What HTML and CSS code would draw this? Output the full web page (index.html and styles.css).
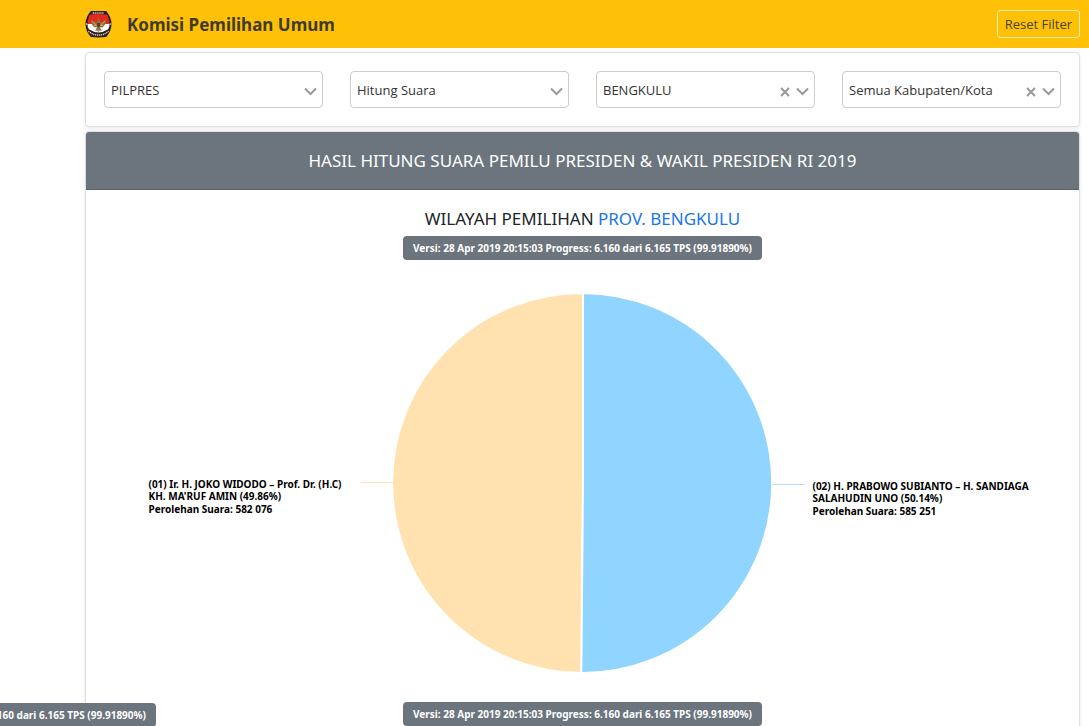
FILE: index.html
```html
<!DOCTYPE html>
<html lang="id">
  <head>
    <meta charset="utf-8">
    <meta name="viewport" content="width=device-width, initial-scale=1.0">
    <title>Komisi Pemilihan Umum</title>
    <link rel="stylesheet" href="styles.css">
  </head>
  <body>
    <header class="navbar">
      <svg class="logo" viewBox="0 0 28 28" aria-hidden="true">
        <path d="M6 .5h16Q27.500 7 27.500 14T22 27.500Q14 28.500 6 27.500Q.5 21 .5 14T6 .5z" fill="#2b2019"/>
        <path d="M5 4.500Q14 3 23 4.500Q25.500 9 25.500 14H2.500Q2.500 9 5 4.500z" fill="#e3281d"/>
        <path d="M2.500 14h23Q25.500 17 24 19.500Q14 26 4 19.500Q2.500 17 2.500 14z" fill="#fff"/>
        <path d="M6.500 9Q5.500 14 10 17.500L12.500 17L11 20.500L14 22L17 20.500L15.500 17L18 17.500Q22.500 14 21.500 9L18 12.500L15.500 12L15 8.500L13 8L13 12L10 12.500z" fill="#94703f"/>
        <path d="M7.500 11l4 4M20.500 11l-4 4M9 15.500l3 0M19 15.500l-3 0" stroke="#d8b878" stroke-width=".8" fill="none"/>
        <path d="M12.500 13h3v3l-1.500 1.500l-1.500-1.500z" fill="#5e3a20"/>
        <path d="M10 20.500h8" stroke="#a9a29a" stroke-width="1"/>
        <path d="M8 2.500h12" stroke="#ddd" stroke-width="1.500" stroke-dasharray="1.200 .8"/>
        <path d="M3.500 21.500Q8 25.500 14 25.500T24.500 21.500" stroke="#ddd" stroke-width="1.500" stroke-dasharray="1.200 .8" fill="none"/>
        <circle cx="1.700" cy="14" r=".7" fill="#fff"/>
        <circle cx="26.300" cy="14" r=".7" fill="#fff"/>
      </svg>
      <h1 class="brand">Komisi Pemilihan Umum</h1>
      <button type="button" class="btn-reset">Reset Filter</button>
    </header>

    <main class="content">
      <form class="card filters">
        <div class="select-box">
          <select class="select" aria-label="Pemilihan">
            <option>PILPRES</option>
          </select>
          <div class="select-icons">
            <svg class="arrow" viewBox="0 0 13 9"><path d="M1 1.500l5.500 5.500L12 1.500"/></svg>
          </div>
        </div>
        <div class="select-box">
          <select class="select" aria-label="Tampilan">
            <option>Hitung Suara</option>
          </select>
          <div class="select-icons">
            <svg class="arrow" viewBox="0 0 13 9"><path d="M1 1.500l5.500 5.500L12 1.500"/></svg>
          </div>
        </div>
        <div class="select-box">
          <select class="select" aria-label="Provinsi">
            <option>BENGKULU</option>
          </select>
          <div class="select-icons">
            <button type="button" class="clear" aria-label="Hapus provinsi">
              <svg viewBox="0 0 10 10"><path d="M1 1l8 8M9 1L1 9"/></svg>
            </button>
            <svg class="arrow" viewBox="0 0 13 9"><path d="M1 1.500l5.500 5.500L12 1.500"/></svg>
          </div>
        </div>
        <div class="select-box">
          <select class="select" aria-label="Kabupaten/Kota">
            <option>Semua Kabupaten/Kota</option>
          </select>
          <div class="select-icons">
            <button type="button" class="clear" aria-label="Hapus kabupaten">
              <svg viewBox="0 0 10 10"><path d="M1 1l8 8M9 1L1 9"/></svg>
            </button>
            <svg class="arrow" viewBox="0 0 13 9"><path d="M1 1.500l5.500 5.500L12 1.500"/></svg>
          </div>
        </div>
      </form>

      <section class="card result">
        <h2 class="result-header">HASIL HITUNG SUARA PEMILU PRESIDEN &amp; WAKIL PRESIDEN RI 2019</h2>
        <div class="result-body">
          <h3 class="region">WILAYAH PEMILIHAN <a href="#">PROV. BENGKULU</a></h3>
          <span class="badge">Versi: 28 Apr 2019 20:15:03 Progress: 6.160 dari 6.165 TPS (99.91890%)</span>

          <div class="chart">
            <div class="side side-left">
              <p class="label">
                (01) Ir. H. JOKO WIDODO – Prof. Dr. (H.C)<br>
                KH. MA'RUF AMIN (49.86%)
                <span class="votes">Perolehan Suara: 582 076</span>
              </p>
              <span class="line"></span>
            </div>
            <svg class="pie" viewBox="-190 -190 380 380" role="img" aria-label="Perolehan suara">
              <path class="slice-01" d="M0 0L-1.670 190A190 190 0 0 1 0 -190z"/>
              <path class="slice-02" d="M0 0V-190A190 190 0 1 1 -1.670 190z"/>
            </svg>
            <div class="side side-right">
              <span class="line"></span>
              <p class="label">
                (02) H. PRABOWO SUBIANTO – H. SANDIAGA<br>
                SALAHUDIN UNO (50.14%)
                <span class="votes">Perolehan Suara: 585 251</span>
              </p>
            </div>
          </div>

          <span class="badge">Versi: 28 Apr 2019 20:15:03 Progress: 6.160 dari 6.165 TPS (99.91890%)</span>
        </div>
      </section>
    </main>

    <div class="badge badge-fixed">Versi: 28 Apr 2019 20:15:03 Progress: 6.160 dari 6.165 TPS (99.91890%)</div>
  </body>
</html>
```
FILE: styles.css
```css
* {
  box-sizing: border-box;
}

body {
  margin: 0;
  font-family: "Noto Sans", "Segoe UI", sans-serif;
  font-size: 13px;
  color: #212529;
  background-color: #fff;
}

h1,
h2,
h3,
p {
  margin: 0;
}

.navbar {
  display: flex;
  align-items: center;
  height: 48px;
  padding: 0 9px 0 85px;
  background-color: #ffc107;
}

.logo {
  width: 27px;
  height: 28px;
}

.brand {
  margin-left: 15px;
  font-size: 17px;
  font-weight: 700;
  color: #3e3c26;
}

.btn-reset {
  height: 28px;
  margin-left: auto;
  padding: 0 7px;
  border: 1px solid #fff0b0;
  border-radius: 3px;
  font-family: "Open Sans", sans-serif;
  font-size: 13px;
  color: #4a431f;
  background: transparent;
  cursor: pointer;
}

.content {
  padding: 4px 9px 20px 85px;
}

.card {
  margin-bottom: 4px;
  border: 1px solid #dfdfdf;
  border-radius: 4px;
  background-color: #fff;
  box-shadow: 0 2px 4px rgba(0, 0, 0, 0.08);
}

.filters {
  display: grid;
  grid-template-columns: repeat(4, 1fr);
  gap: 27px;
  padding: 18px;
}

.select-box {
  position: relative;
}

.select {
  display: block;
  width: 100%;
  height: 37px;
  padding: 0 50px 0 6px;
  border: 1px solid #ccc;
  border-radius: 4px;
  font-family: "Open Sans", sans-serif;
  font-size: 13px;
  color: #333;
  background-color: #fff;
  appearance: none;
}

.select-icons {
  position: absolute;
  top: 0;
  right: 6px;
  display: flex;
  align-items: center;
  gap: 6px;
  height: 41px;
  pointer-events: none;
}

.select-icons path {
  fill: none;
  stroke: #999;
  stroke-width: 2;
}

.arrow {
  width: 13px;
  height: 9px;
}

.clear {
  display: flex;
  padding: 0;
  border: 0;
  background: none;
  cursor: pointer;
  pointer-events: auto;
}

.clear svg {
  width: 10px;
  height: 10px;
}

.result-header {
  padding: 16px 20px;
  border-bottom: 1px solid #5c646b;
  border-radius: 3px 3px 0 0;
  font-size: 17px;
  font-weight: 400;
  line-height: 25px;
  text-align: center;
  color: #fff;
  background-color: #6c757d;
}

.result-body {
  display: flex;
  flex-direction: column;
  align-items: center;
  padding: 16px 0 20px;
}

.region {
  margin-bottom: 4px;
  font-size: 17px;
  font-weight: 400;
  line-height: 26px;
}

.region a {
  color: #1976e8;
  text-decoration: none;
}

.badge {
  padding: 0 10px;
  border-radius: 4px;
  font-size: 10px;
  font-weight: 700;
  line-height: 24px;
  white-space: nowrap;
  color: #fff;
  background-color: #6c757d;
}

.badge-fixed {
  position: fixed;
  bottom: -1px;
  left: -203px;
}

.chart {
  display: grid;
  grid-template-columns: 1fr 380px 1fr;
  width: 100%;
  margin: 33px 0 29px;
}

.pie {
  display: block;
  width: 100%;
}

.pie path {
  stroke: #fff;
  stroke-width: 2;
}

.slice-01 {
  fill: #ffe2b0;
}

.slice-02 {
  fill: #8fd5ff;
}

.side {
  display: flex;
  align-items: flex-start;
  gap: 8px;
}

.side-left {
  justify-content: flex-end;
  padding-top: 185px;
}

.side-right {
  padding-top: 187px;
}

.line {
  width: 32px;
  height: 1px;
  margin-top: 4px;
  background-color: #b5e0fa;
}

.side-left .line {
  background-color: #ffe2b0;
}

.label {
  min-width: 204px;
  font-size: 10px;
  font-weight: 700;
  line-height: 12px;
  white-space: nowrap;
  color: #000;
}

.votes {
  display: block;
  margin-top: 1px;
}
```
